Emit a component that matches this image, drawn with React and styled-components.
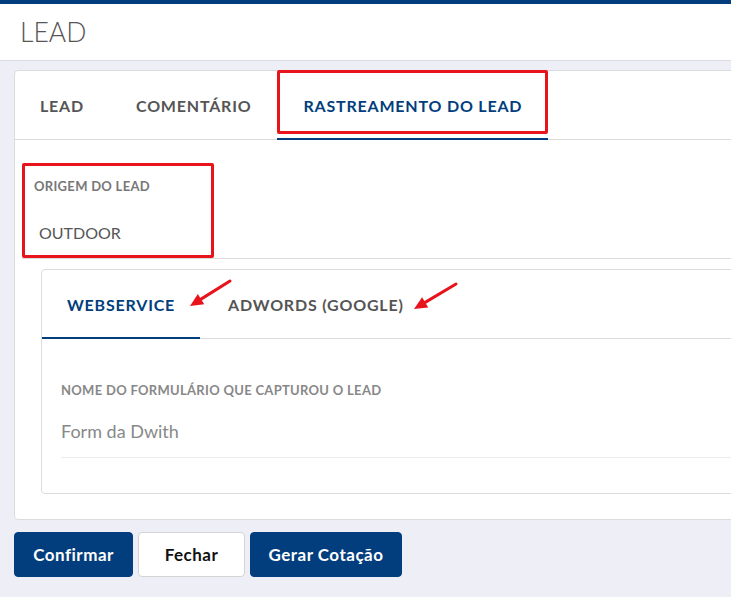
import styled, { createGlobalStyle } from 'styled-components';

const GlobalStyle = createGlobalStyle`
	html, body {
		margin: 0;
		padding: 0;
		background: #eeeef7;
		overflow: hidden;
	}
	body {
		font-family: Lato, 'Liberation Sans', sans-serif;
	}
	* {
		box-sizing: border-box;
	}
`;

const BLUE = '#023e7d';
const MARK = '#e8141b';

const Page = styled.div`
	position: relative;
	min-height: 597px;
	border-top: 4px solid ${BLUE};
`;

const Header = styled.header`
	height: 57px;
	display: flex;
	align-items: center;
	padding-left: 20px;
	background: #fff;
	border-bottom: 1px solid #dcdce6;
	h1 {
		margin: 0;
		font-size: 26.5px;
		font-weight: 300;
		color: #555;
	}
`;

const Main = styled.main`
	padding: 9px 0 0 14px;
`;

const Card = styled.section`
	width: 740px;
	background: #fff;
	border: 1px solid #dcdcdc;
	border-radius: 4px;
	padding-bottom: ${(p) => p.$pb || 0}px;
`;

const TabBar = styled.nav`
	display: flex;
	height: ${(p) => p.$h}px;
	border-bottom: 1px solid #dcdcdc;
`;

const Tab = styled.div`
	position: relative;
	display: flex;
	align-items: center;
	padding: 0 ${(p) => p.$px || 26}px 0 ${(p) => p.$pl || p.$px || 26}px;
	font-size: 16px;
	font-weight: 700;
	color: ${(p) => (p.$active ? BLUE : '#555')};
	letter-spacing: 0.8px;
	white-space: nowrap;
	&::before {
		content: '';
		display: ${(p) => (p.$active ? 'block' : 'none')};
		position: absolute;
		left: 0;
		right: 0;
		bottom: -1px;
		height: 2px;
		background: ${BLUE};
	}
	&::after {
		content: '';
		display: ${(p) => (p.$marked ? 'block' : 'none')};
		position: absolute;
		left: 0;
		right: 0;
		top: -1px;
		bottom: 5px;
		border: 3px solid ${MARK};
		border-radius: 2px;
	}
`;

const OriginRow = styled.div`
	margin: 23px 0 0 7px;
	border-bottom: 1px solid #dcdcdc;
`;

const Field = styled.div`
	position: relative;
	width: 192px;
	height: 95px;
	padding: 15px 0 0 12px;
	&::after {
		content: '';
		display: ${(p) => (p.$marked ? 'block' : 'none')};
		position: absolute;
		inset: 0;
		border: 3px solid ${MARK};
		border-radius: 2px;
	}
`;

const Label = styled.div`
	font-size: 13px;
	font-weight: 700;
	color: ${(p) => p.$color || '#777'};
	letter-spacing: 0.3px;
	white-space: nowrap;
`;

const Value = styled.div`
	margin-top: ${(p) => p.$mt}px;
	padding-left: ${(p) => p.$pl || 0}px;
	font-size: ${(p) => p.$size || 16}px;
	color: ${(p) => p.$color || '#555'};
`;

const InnerWrap = styled.div`
	padding: 10px 0 0 26px;
`;

const FormBlock = styled.div`
	margin: 43px 0 0 19px;
	padding-bottom: 15px;
	border-bottom: 1px solid #ececec;
`;

const Actions = styled.div`
	display: flex;
	gap: 5px;
	margin-top: 12px;
`;

const Button = styled.button`
	width: ${(p) => p.$w}px;
	height: 45px;
	padding: 0;
	font-family: inherit;
	font-size: 17px;
	font-weight: 700;
	letter-spacing: 0.5px;
	border-radius: 4px;
	border: 1px solid ${(p) => (p.$light ? '#d4d4d4' : BLUE)};
	background: ${(p) => (p.$light ? '#fff' : BLUE)};
	color: ${(p) => (p.$light ? '#111' : '#fff')};
	cursor: pointer;
`;

const Arrows = styled.svg`
	position: absolute;
	left: 0;
	top: 0;
	pointer-events: none;
`;

const Arrow = ({ x1, y1, x2, y2 }) => {
	const a = Math.atan2(y2 - y1, x2 - x1);
	const len = 13;
	const w = 6;
	const bx = x2 - len * Math.cos(a);
	const by = y2 - len * Math.sin(a);
	const px = -Math.sin(a) * w;
	const py = Math.cos(a) * w;
	return (
		<g>
			<line x1={x1} y1={y1} x2={bx} y2={by} stroke={MARK} strokeWidth='3' strokeLinecap='round' />
			<polygon points={`${x2},${y2} ${bx + px},${by + py} ${bx - px},${by - py}`} fill={MARK} />
		</g>
	);
};

const App = () => {
	return (
		<Page>
			<GlobalStyle />
			<Header>
				<h1>LEAD</h1>
			</Header>
			<Main>
				<Card $pb={25}>
					<TabBar $h={69}>
						<Tab $pl={25}>LEAD</Tab>
						<Tab>COMENTÁRIO</Tab>
						<Tab $active $marked>
							RASTREAMENTO DO LEAD
						</Tab>
					</TabBar>
					<OriginRow>
						<Field $marked>
							<Label>ORIGEM DO LEAD</Label>
							<Value $mt={29} $pl={5}>
								OUTDOOR
							</Value>
						</Field>
					</OriginRow>
					<InnerWrap>
						<Card $pb={35}>
							<TabBar $h={69}>
								<Tab $active $px={25}>
									WEBSERVICE
								</Tab>
								<Tab $px={28}>ADWORDS (GOOGLE)</Tab>
							</TabBar>
							<FormBlock>
								<Label $color='#888'>NOME DO FORMULÁRIO QUE CAPTUROU O LEAD</Label>
								<Value $mt={22} $size={18} $color='#888'>
									Form da Dwith
								</Value>
							</FormBlock>
						</Card>
					</InnerWrap>
				</Card>
				<Actions>
					<Button $w={119}>Confirmar</Button>
					<Button $light $w={107}>
						Fechar
					</Button>
					<Button $w={152}>Gerar Cotação</Button>
				</Actions>
			</Main>
			<Arrows width='731' height='597'>
				<Arrow x1={230} y1={277} x2={190} y2={302} />
				<Arrow x1={456} y1={280} x2={414} y2={305} />
			</Arrows>
		</Page>
	);
};

export default App;
